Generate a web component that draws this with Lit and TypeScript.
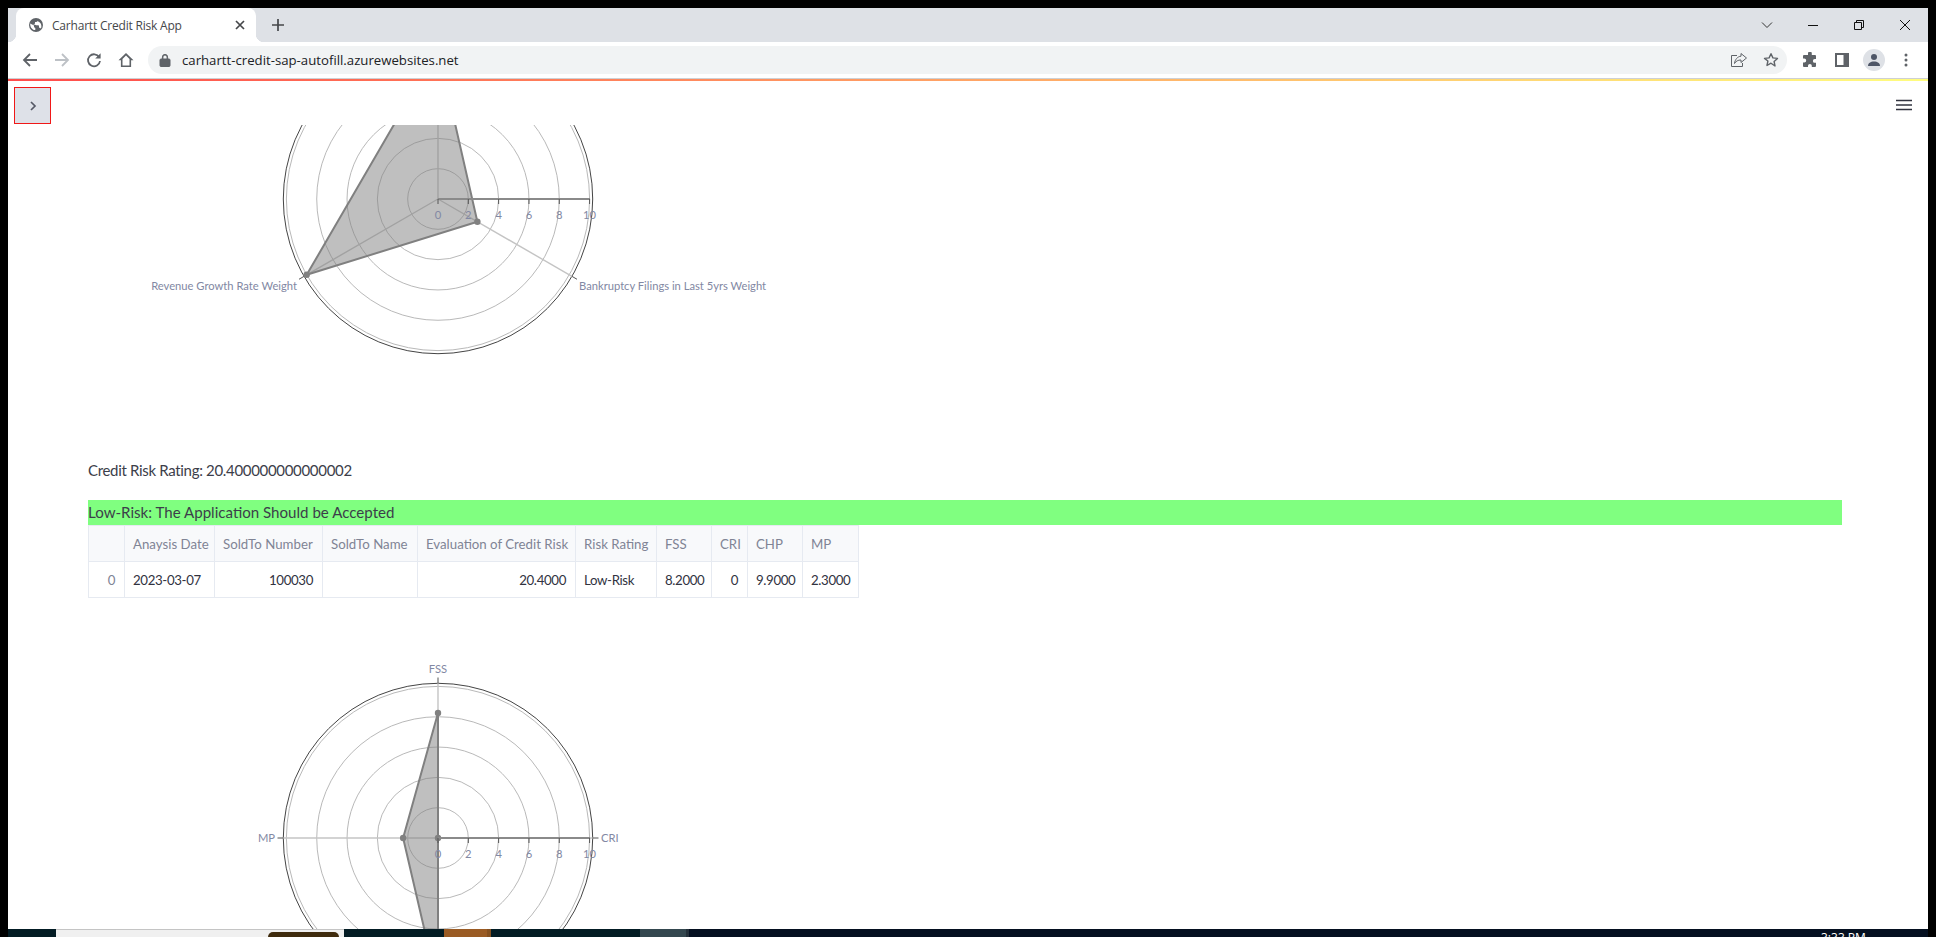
import { LitElement, css, html, svg } from 'lit';
import { customElement, property } from 'lit/decorators.js';

interface Axis {
  label?: string;
  angle: number;
  value: number;
  lx?: number;
  ly?: number;
  anchor?: string;
}

const UNIT = 15.16;

@customElement('radar-chart')
class RadarChart extends LitElement {
  @property({ type: Number }) cy = 0;
  @property({ type: Number }) top = 0;
  @property({ type: Number }) h = 0;
  @property({ attribute: false }) axes: Axis[] = [];

  static override styles = css`
    :host {
      display: block;
    }
    svg {
      display: block;
    }
    text {
      font-family: 'Lato', 'Liberation Sans', sans-serif;
      font-size: 11.2px;
      fill: #8288a3;
    }
    .ring {
      fill: none;
      stroke: #b9b9b9;
      stroke-width: 1;
    }
    .outer {
      fill: none;
      stroke: #444;
      stroke-width: 1;
    }
    .spoke {
      stroke: #c4c4c4;
      stroke-width: 1.4;
    }
    .shape {
      fill: rgba(128, 128, 128, 0.5);
      stroke: #808080;
      stroke-width: 2;
      stroke-linejoin: round;
    }
    .dot {
      fill: #808080;
    }
    .axis {
      stroke: #8a8a8a;
      stroke-width: 2;
    }
    .tick {
      stroke: #555;
      stroke-width: 1;
    }
  `;

  private pt(angle: number, r: number) {
    const a = (angle * Math.PI) / 180;
    return [438 + r * Math.cos(a), this.cy + r * Math.sin(a)];
  }

  override render() {
    const cy = this.cy;
    const points = this.axes.map(a => this.pt(a.angle, a.value * UNIT));
    return html`
      <svg width="720" height=${this.h} viewBox="88 ${this.top} 720 ${this.h}">
        <circle class="outer" cx="438" cy=${cy} r="154.7"></circle>
        ${[2, 4, 6, 8, 10].map(
          n => svg`<circle class="ring" cx="438" cy=${cy} r=${n * UNIT}></circle>`
        )}
        ${this.axes.map(a => {
          const [x, y] = this.pt(a.angle, 154.7);
          const [x2, y2] = this.pt(a.angle, 160.5);
          return svg`
            <line class="spoke" x1="438" y1=${cy} x2=${x} y2=${y}></line>
            <line class="tick" x1=${x} y1=${y} x2=${x2} y2=${y2}></line>
            ${a.label
              ? svg`<text x=${a.lx} y=${a.ly} text-anchor=${a.anchor}>${a.label}</text>`
              : ''}
          `;
        })}
        <polygon class="shape" points=${points.map(p => p.join(',')).join(' ')}></polygon>
        ${points.map(p => svg`<circle class="dot" cx=${p[0]} cy=${p[1]} r="3.2"></circle>`)}
        <line class="axis" x1="438" y1=${cy} x2="590" y2=${cy}></line>
        ${[0, 2, 4, 6, 8, 10].map(
          n => svg`
            <line class="tick" x1=${438 + n * UNIT} y1=${cy} x2=${438 + n * UNIT} y2=${cy + 5}></line>
            <text x=${438 + n * UNIT} y=${cy + 20} text-anchor="middle">${n}</text>
          `
        )}
      </svg>
    `;
  }
}

const COLS = [
  { name: '', width: 36 },
  { name: 'Anaysis Date', width: 90 },
  { name: 'SoldTo Number', width: 108 },
  { name: 'SoldTo Name', width: 95 },
  { name: 'Evaluation of Credit Risk', width: 158 },
  { name: 'Risk Rating', width: 81 },
  { name: 'FSS', width: 55 },
  { name: 'CRI', width: 36 },
  { name: 'CHP', width: 55 },
  { name: 'MP', width: 56 },
];

const ROW = [
  { v: '0', cls: 'idx' },
  { v: '2023-03-07', cls: '' },
  { v: '100030', cls: 'num' },
  { v: '', cls: '' },
  { v: '20.4000', cls: 'num' },
  { v: 'Low-Risk', cls: '' },
  { v: '8.2000', cls: 'num' },
  { v: '0', cls: 'num' },
  { v: '9.9000', cls: 'num' },
  { v: '2.3000', cls: 'num' },
];

const TOP_AXES: Axis[] = [
  { angle: -90, value: 9.9 },
  { label: 'Bankruptcy Filings in Last 5yrs Weight', angle: 30, value: 3, lx: 579, ly: 290, anchor: 'start' },
  { label: 'Revenue Growth Rate Weight', angle: 150, value: 10, lx: 297, ly: 290, anchor: 'end' },
];

const BOTTOM_AXES: Axis[] = [
  { label: 'FSS', angle: -90, value: 8.25, lx: 438, ly: 672, anchor: 'middle' },
  { label: 'CRI', angle: 0, value: 0, lx: 601, ly: 841, anchor: 'start' },
  { label: 'CHP', angle: 90, value: 9.9 },
  { label: 'MP', angle: 180, value: 2.3, lx: 275, ly: 841, anchor: 'end' },
];

@customElement('app-root')
export class AppRoot extends LitElement {
  static override styles = css`
    :host {
      display: block;
      width: 1936px;
      height: 937px;
      background: #000;
      overflow: hidden;
      font-family: 'Lato', 'Liberation Sans', sans-serif;
      color: #31333f;
    }
    .window {
      margin: 0 8px;
      padding-top: 8px;
      height: 929px;
      box-sizing: border-box;
      display: flex;
      flex-direction: column;
    }
    svg {
      display: block;
    }

    /* browser chrome */
    .tabstrip {
      height: 34px;
      background: #dee1e6;
      display: flex;
      align-items: stretch;
      padding-left: 8px;
      flex: none;
    }
    .tab {
      position: relative;
      width: 240px;
      background: #fff;
      border-radius: 8px 8px 0 0;
      display: flex;
      align-items: center;
      padding: 0 8px 0 12px;
      box-sizing: border-box;
      gap: 8px;
    }
    .tab::before,
    .tab::after {
      content: '';
      position: absolute;
      bottom: 0;
      width: 8px;
      height: 8px;
    }
    .tab::before {
      left: -8px;
      background: radial-gradient(circle at 0 0, transparent 8px, #fff 8.5px);
    }
    .tab::after {
      right: -8px;
      background: radial-gradient(circle at 100% 0, transparent 8px, #fff 8.5px);
    }
    .tab-title {
      flex: 1;
      font-family: 'Open Sans', 'Liberation Sans', sans-serif;
      font-size: 12px;
      letter-spacing: -0.2px;
      color: #45474a;
      white-space: nowrap;
    }
    .newtab {
      width: 28px;
      margin-left: 8px;
      display: flex;
      align-items: center;
      justify-content: center;
    }
    .spacer {
      flex: 1;
    }
    .winctl {
      width: 46px;
      display: flex;
      align-items: center;
      justify-content: center;
    }
    .toolbar {
      height: 36px;
      background: #fff;
      display: flex;
      align-items: center;
      padding: 0 6px;
      flex: none;
    }
    .tool {
      width: 32px;
      height: 32px;
      flex: none;
      display: flex;
      align-items: center;
      justify-content: center;
    }
    .omnibox {
      flex: 1;
      height: 28px;
      margin: 0 7px 0 6px;
      background: #f1f3f4;
      border-radius: 14px;
      display: flex;
      align-items: center;
      padding-left: 11px;
    }
    .url {
      flex: 1;
      margin-left: 11px;
      font-family: 'Open Sans', 'Liberation Sans', sans-serif;
      font-size: 13.2px;
      color: #202124;
      white-space: nowrap;
    }
    .avatar {
      width: 22px;
      height: 22px;
      border-radius: 50%;
      background: #dee1e6;
      display: flex;
      align-items: center;
      justify-content: center;
      overflow: hidden;
    }
    .accent {
      height: 3px;
      flex: none;
      border-top: 1px solid #ced0d4;
      box-sizing: border-box;
      background: linear-gradient(90deg, #ff4b4b, #fffd80);
    }

    /* app */
    .page {
      flex: 1;
      min-height: 0;
      background: #fff;
      display: flex;
      flex-direction: column;
      overflow: hidden;
    }
    .app-header {
      height: 44px;
      flex: none;
      display: flex;
      justify-content: space-between;
      align-items: flex-start;
      padding: 6px 16px 0 6px;
      box-sizing: border-box;
    }
    .expand {
      width: 37px;
      height: 37px;
      box-sizing: border-box;
      background: #dee1e8;
      border: 1px solid #f01818;
      display: flex;
      align-items: center;
      justify-content: center;
    }
    .burger {
      margin-top: 12px;
    }
    .content {
      padding-left: 80px;
      width: 1754px;
    }
    .rating {
      margin: 104px 0 18px;
      font-size: 15px;
      line-height: 23px;
      letter-spacing: -0.32px;
      color: #3c3e4a;
    }
    .verdict {
      height: 25px;
      line-height: 24px;
      background: #80ff80;
      font-size: 15.1px;
      color: #3c3e4a;
    }
    table {
      width: 770px;
      border-collapse: collapse;
      table-layout: fixed;
      margin-bottom: 43px;
    }
    th,
    td {
      border: 1px solid #e6eaf1;
      font-size: 13.25px;
      font-weight: 400;
      height: 36px;
      padding: 0 9px 0 8px;
      box-sizing: border-box;
      white-space: nowrap;
      overflow: hidden;
      text-align: left;
    }
    th {
      background: #f8f9fb;
      color: #808495;
    }
    td {
      letter-spacing: -0.35px;
    }
    td.num {
      text-align: right;
    }
    td.idx {
      text-align: right;
      color: #808495;
    }

    /* task bar */
    .taskbar {
      height: 8px;
      display: flex;
      overflow: hidden;
      background: #040f20;
      margin: 0 8px;
      flex: none;
    }
    .seg {
      flex: none;
    }
    .search {
      width: 288px;
      background: #f0f0f0;
      border-top: 1px solid #c4c4c4;
      box-sizing: border-box;
      display: flex;
      justify-content: flex-end;
      padding: 2px 5px 0 0;
    }
    .search i {
      display: block;
      width: 71px;
      height: 12px;
      background: #3f2b0d;
      border-radius: 5px 5px 0 0;
    }
    .clock {
      margin-left: 1132px;
      width: 100px;
      color: #fff;
      font-family: 'Open Sans', 'Liberation Sans', sans-serif;
      font-size: 12px;
      line-height: 18px;
      white-space: nowrap;
    }
  `;

  override render() {
    return html`
      <div class="window">
        <div class="tabstrip">
          <div class="tab">
            <svg width="16" height="16" viewBox="0 0 16 16">
              <circle cx="8" cy="8" r="7" fill="#5f6368"></circle>
              <path d="M2.2 6.4 6 8.6v1c0 .8.6 1.3 1.3 1.3v2.2C4.6 12.9 2 10.6 2.2 6.4zM9.6 2.2v1.4c0 .7-.6 1.3-1.3 1.3H7v1.3c0 .4-.3.7-.7.7H5l3.4 1.4h1.9c.4 0 .7.3.7.7v1.8h.7c.6 0 1.1.4 1.2.9 1.3-2.8.2-6.4-3.3-7.5z" fill="#fff"></path>
            </svg>
            <span class="tab-title">Carhartt Credit Risk App</span>
            <svg width="16" height="16" viewBox="0 0 16 16">
              <path d="M4 4l8 8M12 4l-8 8" stroke="#45474a" stroke-width="1.7"></path>
            </svg>
          </div>
          <div class="newtab">
            <svg width="14" height="14" viewBox="0 0 14 14">
              <path d="M7 1v12M1 7h12" stroke="#45474a" stroke-width="1.7"></path>
            </svg>
          </div>
          <div class="spacer"></div>
          <div class="winctl">
            <svg width="12" height="8" viewBox="0 0 12 8">
              <path d="M1 1.5l5 5 5-5" fill="none" stroke="#333" stroke-width="1"></path>
            </svg>
          </div>
          <div class="winctl">
            <svg width="12" height="12" viewBox="0 0 12 12"><path d="M1 6.5h10" stroke="#111" stroke-width="1"></path></svg>
          </div>
          <div class="winctl">
            <svg width="12" height="12" viewBox="0 0 12 12">
              <path d="M1.5 3.5h7v7h-7zM3.5 3.5v-2h7v7h-2" fill="none" stroke="#111" stroke-width="1"></path>
            </svg>
          </div>
          <div class="winctl">
            <svg width="12" height="12" viewBox="0 0 12 12"><path d="M1 1l10 10M11 1L1 11" stroke="#111" stroke-width="1"></path></svg>
          </div>
        </div>

        <div class="toolbar">
          <div class="tool">
            <svg width="16" height="16" viewBox="0 0 16 16">
              <path d="M15 8H2.5M8 2L2 8l6 6" fill="none" stroke="#5f6368" stroke-width="1.8"></path>
            </svg>
          </div>
          <div class="tool">
            <svg width="16" height="16" viewBox="0 0 16 16">
              <path d="M1 8h12.5M8 2l6 6-6 6" fill="none" stroke="#bdc1c6" stroke-width="1.8"></path>
            </svg>
          </div>
          <div class="tool">
            <svg width="16" height="16" viewBox="0 0 16 16">
              <path d="M13.2 5.2A6 6 0 1 0 14 9" fill="none" stroke="#5f6368" stroke-width="1.8"></path>
              <path d="M14.6 1.2v5.4H9.2z" fill="#5f6368"></path>
            </svg>
          </div>
          <div class="tool">
            <svg width="18" height="18" viewBox="0 0 18 18">
              <path d="M9 2L1.5 9.2h2.4V16h10.2V9.2h2.4zM5.5 14.5V8L9 4.6 12.5 8v6.5z" fill="#5f6368" fill-rule="evenodd"></path>
            </svg>
          </div>
          <div class="omnibox">
            <svg width="12" height="14" viewBox="0 0 12 14">
              <path d="M2 6h8a1 1 0 0 1 1 1v5.5a1 1 0 0 1-1 1H2a1 1 0 0 1-1-1V7a1 1 0 0 1 1-1zM3.4 6V4a2.6 2.6 0 0 1 5.2 0v2" fill="#5f6368" stroke="#5f6368" stroke-width="1"></path>
              <path d="M4.4 5.5V4a1.6 1.6 0 0 1 3.2 0v1.5z" fill="#f1f3f4"></path>
            </svg>
            <span class="url">carhartt-credit-sap-autofill.azurewebsites.net</span>
            <div class="tool">
              <svg width="18" height="16" viewBox="0 0 18 16">
                <path d="M7 3.5H1.5v11h11V11" fill="none" stroke="#5f6368" stroke-width="1"></path>
                <path d="M11 1.5l5.5 4.5-5.5 4.5V8C8 8 6 9 4.5 11.5 5 7.5 7.5 4.5 11 4.2z" fill="none" stroke="#5f6368" stroke-width="1"></path>
              </svg>
            </div>
            <div class="tool">
              <svg width="16" height="16" viewBox="0 0 16 16">
                <path d="M8 1.7l1.900 4.200 4.600.5-3.400 3.100.9 4.500L8 11.200l-4 2.300.9-4.500L1.500 6.400l4.600-.5z" fill="none" stroke="#5f6368" stroke-width="1.4" stroke-linejoin="round"></path>
              </svg>
            </div>
          </div>
          <div class="tool">
            <svg width="16" height="16" viewBox="0 0 16 16">
              <path d="M6 1.5a1.900 1.900 0 0 1 3.800 0V3H13a1 1 0 0 1 1 1v3h-1.200a1.900 1.900 0 0 0 0 3.800H14V14a1 1 0 0 1-1 1H9.800v-1.200a1.900 1.900 0 0 0-3.800 0V15H2a1 1 0 0 1-1-1v-3.500h1.200a2 2 0 0 0 0-4H1V4a1 1 0 0 1 1-1h4z" fill="#5f6368"></path>
            </svg>
          </div>
          <div class="tool">
            <svg width="14" height="14" viewBox="0 0 14 14">
              <path d="M0 0h14v14H0zM2 2v10h6.5V2z" fill="#5f6368" fill-rule="evenodd"></path>
            </svg>
          </div>
          <div class="tool">
            <div class="avatar">
              <svg width="14" height="14" viewBox="0 0 14 14">
                <circle cx="7" cy="4" r="3" fill="#4d5566"></circle>
                <path d="M1 13c0-3 2.5-4.5 6-4.5s6 1.500 6 4.500z" fill="#4d5566"></path>
              </svg>
            </div>
          </div>
          <div class="tool">
            <svg width="4" height="14" viewBox="0 0 4 14">
              <circle cx="2" cy="2" r="1.5" fill="#5f6368"></circle>
              <circle cx="2" cy="7" r="1.5" fill="#5f6368"></circle>
              <circle cx="2" cy="12" r="1.5" fill="#5f6368"></circle>
            </svg>
          </div>
        </div>
        <div class="accent"></div>

        <div class="page">
          <div class="app-header">
            <div class="expand">
              <svg width="10" height="12" viewBox="0 0 10 12">
                <path d="M3 2l4 4-4 4" fill="none" stroke="#555866" stroke-width="1.7"></path>
              </svg>
            </div>
            <svg class="burger" width="16" height="12" viewBox="0 0 16 12">
              <path d="M0 1.5h16M0 6h16M0 10.5h16" stroke="#31333f" stroke-width="1.5"></path>
            </svg>
          </div>
          <div class="content">
            <radar-chart .axes=${TOP_AXES} cy="199" top="125" h="230"></radar-chart>
            <p class="rating">Credit Risk Rating: 20.400000000000002</p>
            <div class="verdict">Low-Risk: The Application Should be Accepted</div>
            <table>
              <colgroup>${COLS.map(c => html`<col style="width:${c.width}px" />`)}</colgroup>
              <tr>${COLS.map(c => html`<th>${c.name}</th>`)}</tr>
              <tr>${ROW.map(c => html`<td class=${c.cls}>${c.v}</td>`)}</tr>
            </table>
            <radar-chart .axes=${BOTTOM_AXES} cy="837" top="640" h="289"></radar-chart>
          </div>
        </div>
      </div>
      <div class="taskbar">
        <div class="seg" style="width:48px;background:#031c24"></div>
        <div class="seg search"><i></i></div>
        <div class="seg" style="width:100px;background:#031c24"></div>
        <div class="seg" style="width:43px;background:#9a5b24"></div>
        <div class="seg" style="width:4px;background:#85501f"></div>
        <div class="seg" style="width:149px;background:#031c24"></div>
        <div class="seg" style="width:46px;background:#34474f"></div>
        <div class="seg" style="width:3px;background:#24303a"></div>
        <div class="seg clock">3:33 PM</div>
      </div>
    `;
  }
}

export { RadarChart };
